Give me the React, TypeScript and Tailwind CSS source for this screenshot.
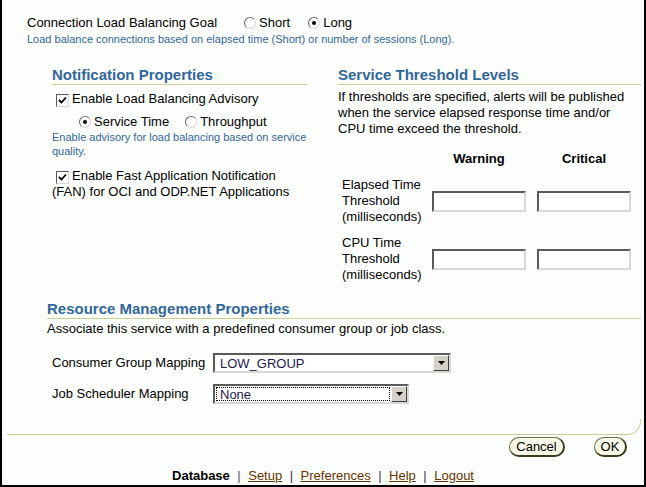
import React from "react";

const Radio = ({ checked }: { checked?: boolean }) => (
  <span className="inline-flex h-[12px] w-[12px] shrink-0 items-center justify-center rounded-full border border-t-[#6a6a6a] border-l-[#6a6a6a] border-r-[#d6d6d6] border-b-[#d6d6d6] bg-white">
    {checked && <span className="h-[4px] w-[4px] rounded-full bg-black" />}
  </span>
);

const Checkbox = () => (
  <span className="inline-flex h-[13px] w-[13px] shrink-0 items-center justify-center border border-t-[#5a5a5a] border-l-[#5a5a5a] border-r-[#d6d6d6] border-b-[#d6d6d6] bg-white align-[-2px]">
    <svg width="9" height="9" viewBox="0 0 9 9">
      <path d="M1 4 L3.5 6.5 L8 1.5" fill="none" stroke="black" strokeWidth="1.8" />
    </svg>
  </span>
);

const TextBox = () => (
  <div className="h-[21px] w-[94px] border-2 border-t-[#5a5a5a] border-l-[#5a5a5a] border-r-[#d8d8d8] border-b-[#d8d8d8] bg-white" />
);

const Select = ({ value, width, focused }: { value: string; width: string; focused?: boolean }) => (
  <div className={`flex h-[20px] ${width} border-2 border-t-[#5a5a5a] border-l-[#5a5a5a] border-r-[#d8d8d8] border-b-[#d8d8d8] bg-white`}>
    <div className="flex flex-1 items-center p-[1px]">
      <div
        className={`flex h-full w-full items-center pl-[3px] text-[13px] leading-none text-[#1e1848] ${
          focused ? "border border-dotted border-black" : "border border-transparent"
        }`}
      >
        {value}
      </div>
    </div>
    <div className="flex w-[16px] items-center justify-center border border-t-white border-l-white border-r-[#404040] border-b-[#404040] bg-[#d4d0c8]">
      <svg width="7" height="4" viewBox="0 0 7 4">
        <path d="M0 0 H7 L3.5 4 Z" fill="black" />
      </svg>
    </div>
  </div>
);

const Header = ({ children }: { children: React.ReactNode }) => (
  <div className="h-[19px] border-b border-[#cccc99] text-[15px] font-bold leading-[18px] text-[#336699]">
    {children}
  </div>
);

const PillButton = ({ label, width }: { label: string; width: string }) => (
  <button
    className={`flex h-[20px] ${width} items-center justify-center rounded-full border border-[#6b6b45] border-b-2 border-r-2 border-b-[#3a3a1c] border-r-[#3a3a1c] bg-[#f8f8e8] text-[13px] leading-none text-black`}
  >
    {label}
  </button>
);

export default function App() {
  return (
    <div className="flex h-[487px] w-[646px] flex-col border-x-2 border-b-2 border-black bg-[#fcfefc] font-['Liberation_Sans',Arial,sans-serif] text-[13px] text-black">
      {/* goal */}
      <div className="pl-[25px] pt-[15px]">
        <div className="flex h-[16px] items-center leading-[16px]">
          <span>Connection Load Balancing Goal</span>
          <span className="ml-[27px] flex items-center gap-[3px]">
            <Radio />
            Short
          </span>
          <span className="ml-[18px] flex items-center gap-[3px]">
            <Radio checked />
            Long
          </span>
        </div>
        <div className="mt-[1px] text-[11px] leading-[14px] text-[#336699]">
          Load balance connections based on elapsed time (Short) or number of sessions (Long).
        </div>
      </div>

      {/* two columns */}
      <div className="mt-[20px] flex gap-[31px] pl-[50px]">
        <div className="w-[255px]">
          <Header>Notification Properties</Header>
          <div className="mt-[6px] flex h-[16px] items-center">
            <span className="ml-[4px]">
              <Checkbox />
            </span>
            <span className="ml-[3px]">Enable Load Balancing Advisory</span>
          </div>
          <div className="mt-[7px] flex h-[16px] items-center pl-[27px]">
            <span className="flex items-center gap-[3px]">
              <Radio checked />
              Service Time
            </span>
            <span className="ml-[16px] flex items-center gap-[3px]">
              <Radio />
              Throughput
            </span>
          </div>
          <div className="text-[11px] leading-[14px] text-[#336699]">
            Enable advisory for load balancing based on service quality.
          </div>
          <div className="mt-[10px] leading-[16px]">
            <span className="ml-[4px] mr-[3px]">
              <Checkbox />
            </span>
            Enable Fast Application Notification (FAN) for OCI and ODP.NET Applications
          </div>
        </div>

        <div className="w-[303px]">
          <Header>Service Threshold Levels</Header>
          <div className="mt-[4px] leading-[16px]">
            If thresholds are specified, alerts will be published when the service elapsed response time and/or
            CPU time exceed the threshold.
          </div>
          <div className="mt-[14px] grid grid-cols-[83px_94px_94px] gap-x-[11px] leading-[16px]">
            <div />
            <div className="text-center font-bold">Warning</div>
            <div className="text-center font-bold">Critical</div>
          </div>
          <div className="mt-[10px] grid grid-cols-[83px_94px_94px] items-center gap-x-[11px] leading-[16px]">
            <div className="whitespace-nowrap pl-[4px]">
              Elapsed Time
              <br />
              Threshold
              <br />
              (milliseconds)
            </div>
            <TextBox />
            <TextBox />
          </div>
          <div className="mt-[10px] grid grid-cols-[83px_94px_94px] items-center gap-x-[11px] leading-[16px]">
            <div className="whitespace-nowrap pl-[4px]">
              CPU Time
              <br />
              Threshold
              <br />
              (milliseconds)
            </div>
            <TextBox />
            <TextBox />
          </div>
        </div>
      </div>

      {/* resource management */}
      <div className="mt-[17px] pl-[45px] pr-[3px]">
        <Header>Resource Management Properties</Header>
        <div className="mt-[2px] leading-[16px]">
          Associate this service with a predefined consumer group or job class.
        </div>
        <div className="mt-[16px] flex items-center pl-[5px]">
          <span className="w-[161px]">Consumer Group Mapping</span>
          <Select value="LOW_GROUP" width="w-[238px]" />
        </div>
        <div className="mt-[11px] flex items-center pl-[5px]">
          <span className="w-[161px]">Job Scheduler Mapping</span>
          <Select value="None" width="w-[196px]" focused />
        </div>
      </div>

      {/* bottom rule */}
      <div className="ml-[5px] mt-[15px] h-[16px] w-[634px] rounded-br-[14px] border-b border-r border-[#cccc99]" />

      <div className="mt-[2px] flex justify-end gap-[29px] pr-[17px]">
        <PillButton label="Cancel" width="w-[56px]" />
        <PillButton label="OK" width="w-[33px]" />
      </div>

      <div className="mt-[11px] flex justify-center gap-[7.5px] leading-[16px]">
        <span className="font-bold">Database</span>
        <span className="text-[#555555]">|</span>
        <a className="text-[#663300] underline">Setup</a>
        <span className="text-[#4a2a5a]">|</span>
        <a className="text-[#663300] underline">Preferences</a>
        <span className="text-[#4a2a5a]">|</span>
        <a className="text-[#663300] underline">Help</a>
        <span className="text-[#4a2a5a]">|</span>
        <a className="text-[#663300] underline">Logout</a>
      </div>
    </div>
  );
}
